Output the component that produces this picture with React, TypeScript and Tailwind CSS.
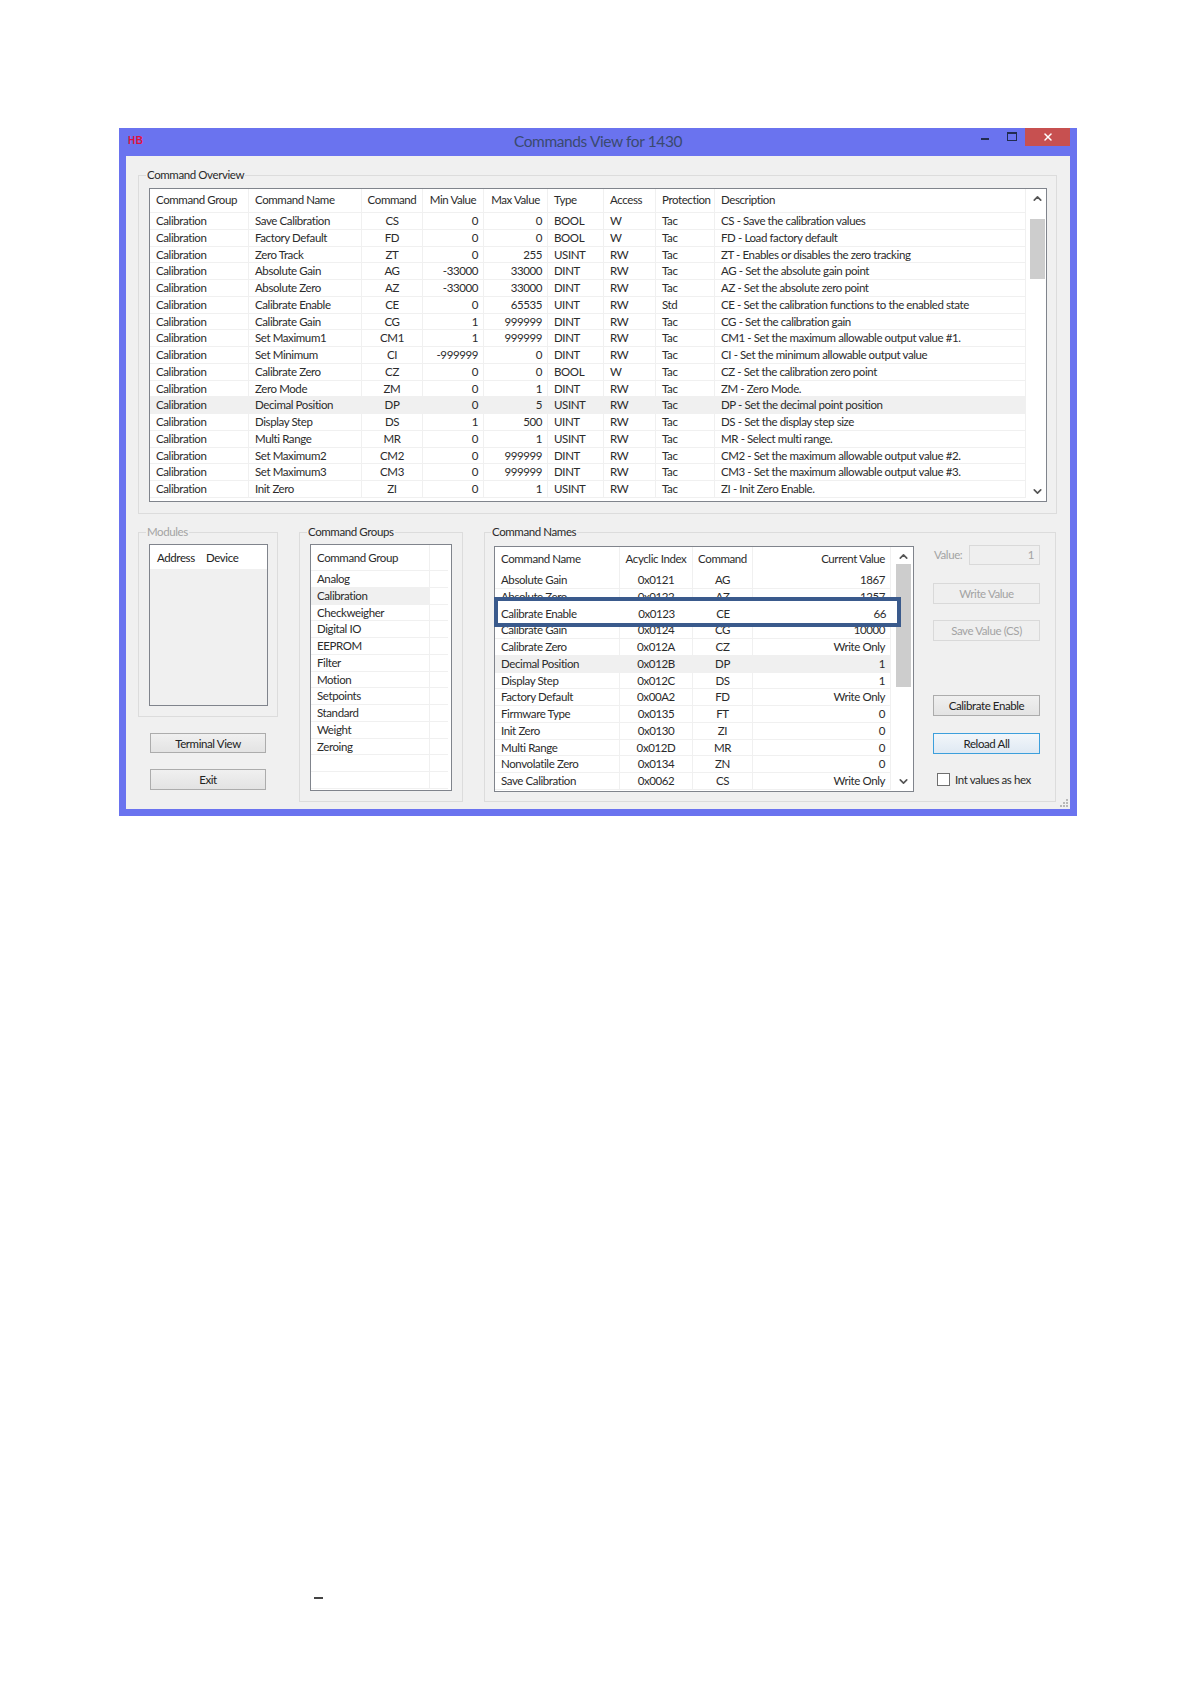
import type { ReactNode } from 'react';
import { ChevronUp, ChevronDown, X } from 'lucide-react';

const overviewRows = [
  ['Save Calibration', 'CS', '0', '0', 'BOOL', 'W', 'Tac', 'CS - Save the calibration values'],
  ['Factory Default', 'FD', '0', '0', 'BOOL', 'W', 'Tac', 'FD - Load factory default'],
  ['Zero Track', 'ZT', '0', '255', 'USINT', 'RW', 'Tac', 'ZT - Enables or disables the zero tracking'],
  ['Absolute Gain', 'AG', '-33000', '33000', 'DINT', 'RW', 'Tac', 'AG - Set the absolute gain point'],
  ['Absolute Zero', 'AZ', '-33000', '33000', 'DINT', 'RW', 'Tac', 'AZ - Set the absolute zero point'],
  ['Calibrate Enable', 'CE', '0', '65535', 'UINT', 'RW', 'Std', 'CE - Set the calibration functions to the enabled state'],
  ['Calibrate Gain', 'CG', '1', '999999', 'DINT', 'RW', 'Tac', 'CG - Set the calibration gain'],
  ['Set Maximum1', 'CM1', '1', '999999', 'DINT', 'RW', 'Tac', 'CM1 - Set the maximum allowable output value #1.'],
  ['Set Minimum', 'CI', '-999999', '0', 'DINT', 'RW', 'Tac', 'CI - Set the minimum allowable output value'],
  ['Calibrate Zero', 'CZ', '0', '0', 'BOOL', 'W', 'Tac', 'CZ - Set the calibration zero point'],
  ['Zero Mode', 'ZM', '0', '1', 'DINT', 'RW', 'Tac', 'ZM - Zero Mode.'],
  ['Decimal Position', 'DP', '0', '5', 'USINT', 'RW', 'Tac', 'DP - Set the decimal point position'],
  ['Display Step', 'DS', '1', '500', 'UINT', 'RW', 'Tac', 'DS - Set the display step size'],
  ['Multi Range', 'MR', '0', '1', 'USINT', 'RW', 'Tac', 'MR - Select multi range.'],
  ['Set Maximum2', 'CM2', '0', '999999', 'DINT', 'RW', 'Tac', 'CM2 - Set the maximum allowable output value #2.'],
  ['Set Maximum3', 'CM3', '0', '999999', 'DINT', 'RW', 'Tac', 'CM3 - Set the maximum allowable output value #3.'],
  ['Init Zero', 'ZI', '0', '1', 'USINT', 'RW', 'Tac', 'ZI - Init Zero Enable.'],
];

const groupRows = ['Analog', 'Calibration', 'Checkweigher', 'Digital IO', 'EEPROM', 'Filter', 'Motion', 'Setpoints', 'Standard', 'Weight', 'Zeroing', '', ''];

const nameRows = [
  ['Absolute Gain', '0x0121', 'AG', '1867'],
  ['Absolute Zero', '0x0122', 'AZ', '1257'],
  ['Calibrate Enable', '0x0123', 'CE', '66'],
  ['Calibrate Gain', '0x0124', 'CG', '10000'],
  ['Calibrate Zero', '0x012A', 'CZ', 'Write Only'],
  ['Decimal Position', '0x012B', 'DP', '1'],
  ['Display Step', '0x012C', 'DS', '1'],
  ['Factory Default', '0x00A2', 'FD', 'Write Only'],
  ['Firmware Type', '0x0135', 'FT', '0'],
  ['Init Zero', '0x0130', 'ZI', '0'],
  ['Multi Range', '0x012D', 'MR', '0'],
  ['Nonvolatile Zero', '0x0134', 'ZN', '0'],
  ['Save Calibration', '0x0062', 'CS', 'Write Only'],
];

const overviewCols = 'grid grid-cols-[99px_113px_61px_61px_64px_56px_52px_59px_311px]';
const nameCols = 'grid grid-cols-[125px_73px_60px_138px]';
const sep = 'border-r border-[#f0f0f0]';
const cell = `${sep} px-[6px] whitespace-nowrap overflow-hidden`;

const Scrollbar = ({ thumb }: { thumb: string }) => (
  <div className="w-[15px] h-full flex flex-col items-center">
    <ChevronUp size={13} strokeWidth={3} className="text-[#555] shrink-0 mt-[3px] mb-[2px]" />
    <div className={`w-full bg-[#cdcdcd] ${thumb}`} />
    <ChevronDown size={13} strokeWidth={3} className="text-[#555] shrink-0 mt-auto mb-[3px]" />
  </div>
);

const Button = ({ label, mt, variant = 'normal' }: { label: string; mt: string; variant?: 'normal' | 'disabled' | 'focus' }) => {
  const look = {
    normal: 'border-[#acacac] bg-gradient-to-b from-[#f0f0f0] to-[#e3e3e3] text-[#222]',
    disabled: 'border-[#d9d9d9] bg-[#efefef] text-[#a3a3a3]',
    focus: 'border-[#3c9fdc] bg-gradient-to-b from-[#f2f6fa] to-[#dfe9f3] text-[#222]',
  }[variant];
  return (
    <button className={`block w-[107px] h-[21px] border text-center leading-[18px] ${mt} ${look}`}>{label}</button>
  );
};

const Fieldset = ({ title, className, disabled, children }: { title: string; className: string; disabled?: boolean; children: ReactNode }) => (
  <fieldset className={`border border-[#dcdcdc] ${className}`}>
    <legend className={`-ml-[3px] px-px leading-[16px] ${disabled ? 'text-[#a3a3a3]' : ''}`}>{title}</legend>
    {children}
  </fieldset>
);

export default function App() {
  return (
    <div className="min-h-[1684px] bg-white pt-[128px] pl-[119px] text-[11.5px] tracking-[-0.4px] text-[#2b2b2b] [font-family:'Lato',sans-serif]">
      <div className="w-[958px] h-[688px] bg-[#6a73ef] px-[7px] pb-[7px] flex flex-col">
        {/* Title bar */}
        <div className="h-[28px] grid grid-cols-[1fr_auto_1fr] shrink-0">
          <div className="pl-[2px] pt-[7px] text-[10px] leading-[12px] font-bold tracking-[0.5px] text-[#e0123c] [font-family:'Liberation_Sans',sans-serif]">HB</div>
          <div className="text-[15.5px] leading-[27px] tracking-[-0.4px] text-[#3a4a70]">Commands View for 1430</div>
          <div className="flex justify-end items-start">
            <div className="w-[8px] h-[2px] bg-[#222c50] mt-[10px]" />
            <div className="w-[10px] h-[9px] border border-t-2 border-[#222c50] ml-[18px] mt-[4px]" />
            <div className="w-[45px] h-[18px] bg-[#c75050] ml-[8px] flex items-center justify-center">
              <X size={12} strokeWidth={3} className="text-white" />
            </div>
          </div>
        </div>

        {/* Client area */}
        <div className="flex-1 bg-[#f0f0f0] pl-[12px] pr-[13px] pt-[11px] relative">
          <Fieldset title="Command Overview" className="h-[347px] pl-[10px] pt-[5px]">
            <div className="w-[898px] h-[314px] border border-[#80848c] bg-white flex">
              <div className="w-[876px]">
                <div className={`${overviewCols} h-[24px] leading-[22px] border-b border-[#f0f0f0]`}>
                  {['Command Group', 'Command Name', 'Command', 'Min Value', 'Max Value', 'Type', 'Access', 'Protection', 'Description'].map((h, i) => (
                    <div key={h} className={`${cell} ${i >= 2 && i <= 4 ? 'text-center !px-0' : ''}`}>{h}</div>
                  ))}
                </div>
                {overviewRows.map((r) => (
                  <div key={r[0]} className={`${overviewCols} h-[16.75px] leading-[15px] border-b border-[#f0f0f0] ${r[0] === 'Decimal Position' ? 'bg-[#f0f0f0]' : ''}`}>
                    <div className={cell}>Calibration</div>
                    <div className={cell}>{r[0]}</div>
                    <div className={`${sep} text-center`}>{r[1]}</div>
                    <div className={`${cell} text-right !pr-[5px]`}>{r[2]}</div>
                    <div className={`${cell} text-right !pr-[5px]`}>{r[3]}</div>
                    <div className={cell}>{r[4]}</div>
                    <div className={cell}>{r[5]}</div>
                    <div className={cell}>{r[6]}</div>
                    <div className={cell}>{r[7]}</div>
                  </div>
                ))}
              </div>
              <div className="ml-[4px]">
                <Scrollbar thumb="mt-[12px] h-[60px]" />
              </div>
            </div>
          </Fieldset>

          <div className="flex items-start mt-[10px]">
            {/* Left column */}
            <div className="w-[140px]">
              <Fieldset title="Modules" disabled className="h-[193px] pl-[10px] pt-[4px]">
                <div className="w-[119px] h-[162px] border border-[#80848c] bg-[#f0f0f0]">
                  <div className="flex h-[24px] bg-white leading-[26px] text-[#222]">
                    <div className="w-[49px] pl-[7px]">Address</div>
                    <div className="w-[46px] pl-[7px]">Device</div>
                  </div>
                </div>
              </Fieldset>
              <button className="block ml-[12px] mt-[16px] w-[116px] h-[20px] border border-[#acacac] bg-gradient-to-b from-[#f0f0f0] to-[#e3e3e3] leading-[17px] text-[#222]">Terminal View</button>
              <button className="block ml-[12px] mt-[16px] w-[116px] h-[21px] border border-[#acacac] bg-gradient-to-b from-[#f0f0f0] to-[#e3e3e3] leading-[18px] text-[#222]">Exit</button>
            </div>

            {/* Command groups */}
            <Fieldset title="Command Groups" className="ml-[21px] w-[164px] h-[278px] pl-[10px] pt-[4px]">
              <div className="w-[142px] h-[247px] border border-[#80848c] bg-white">
                <div className="flex h-[26px] leading-[26px] w-[137px] border-b border-[#f0f0f0]">
                  <div className={`${cell} w-[119px]`}>Command Group</div>
                </div>
                {groupRows.map((g, i) => (
                  <div key={i} className="flex h-[16.75px] leading-[15px] w-[137px] border-b border-[#f0f0f0]">
                    <div className={`${cell} w-[119px] ${g === 'Calibration' ? 'bg-[#f0f0f0]' : ''}`}>{g}</div>
                  </div>
                ))}
              </div>
            </Fieldset>

            {/* Command names */}
            <Fieldset title="Command Names" className="ml-[21px] w-[572px] h-[278px] pl-[9px] pt-[6px]">
              <div className="flex">
                <div className="w-[420px] h-[246px] border border-[#80848c] bg-white flex relative">
                  <div className="w-[396px]">
                    <div className={`${nameCols} h-[25px] leading-[24px]`}>
                      <div className={cell}>Command Name</div>
                      <div className={`${sep} text-center whitespace-nowrap`}>Acyclic Index</div>
                      <div className={`${sep} text-center whitespace-nowrap`}>Command</div>
                      <div className={`${sep} text-right pr-[5px]`}>Current Value</div>
                    </div>
                    {nameRows.map((r) => {
                      const marked = r[2] === 'CE';
                      return (
                        <div key={r[2]} className={`${nameCols} h-[16.75px] leading-[15px] ${marked ? 'relative z-20' : 'border-b border-[#f0f0f0]'} ${r[2] === 'DP' ? 'bg-[#f0f0f0]' : ''}`}>
                          <div className={`${marked ? '' : sep} px-[6px] whitespace-nowrap`}>{r[0]}</div>
                          <div className={`${marked ? '' : sep} text-center`}>{r[1]}</div>
                          <div className={`${marked ? '' : sep} text-center`}>{r[2]}</div>
                          <div className={`${marked ? '' : sep} text-right pr-[5px]`}>{r[3]}</div>
                        </div>
                      );
                    })}
                  </div>
                  <div className="ml-[5px]">
                    <Scrollbar thumb="-mt-px h-[123px]" />
                  </div>
                  {/* Highlight frame pasted over the list */}
                  <div className="absolute z-10 left-[-1px] top-[50px] w-[407px] h-[30px] bg-white border-[4px] border-[#3a5a8c]" />
                </div>

                {/* Right column */}
                <div className="w-[107px] ml-[19px] -mt-px">
                  <div className="flex items-center h-[20px] text-[#a3a3a3]">
                    <span className="w-[36px] pl-px">Value:</span>
                    <div className="w-[72px] h-[20px] border border-[#d9d9d9] bg-[#efefef] text-right pr-[5px] leading-[18px]">1</div>
                  </div>
                  <Button label="Write Value" mt="mt-[18px]" variant="disabled" />
                  <Button label="Save Value (CS)" mt="mt-[16px]" variant="disabled" />
                  <Button label="Calibrate Enable" mt="mt-[54px]" />
                  <Button label="Reload All" mt="mt-[17px]" variant="focus" />
                  <label className="flex items-center mt-[19px] pl-[4px] leading-[13px]">
                    <span className="w-[13px] h-[13px] border border-[#6f6f6f] bg-white shrink-0" />
                    <span className="ml-[5px] whitespace-nowrap">Int values as hex</span>
                  </label>
                </div>
              </div>
            </Fieldset>
          </div>

          {/* Resize grip */}
          <svg width="10" height="10" viewBox="0 0 10 10" className="absolute right-[1px] bottom-[1px] text-[#b8b8b8]" fill="currentColor">
            <rect x="7" y="1" width="2" height="2" />
            <rect x="4" y="4" width="2" height="2" />
            <rect x="7" y="4" width="2" height="2" />
            <rect x="1" y="7" width="2" height="2" />
            <rect x="4" y="7" width="2" height="2" />
            <rect x="7" y="7" width="2" height="2" />
          </svg>
        </div>
      </div>
      <div className="w-[9px] h-[2px] bg-[#444] ml-[195px] mt-[781px]" />
    </div>
  );
}
